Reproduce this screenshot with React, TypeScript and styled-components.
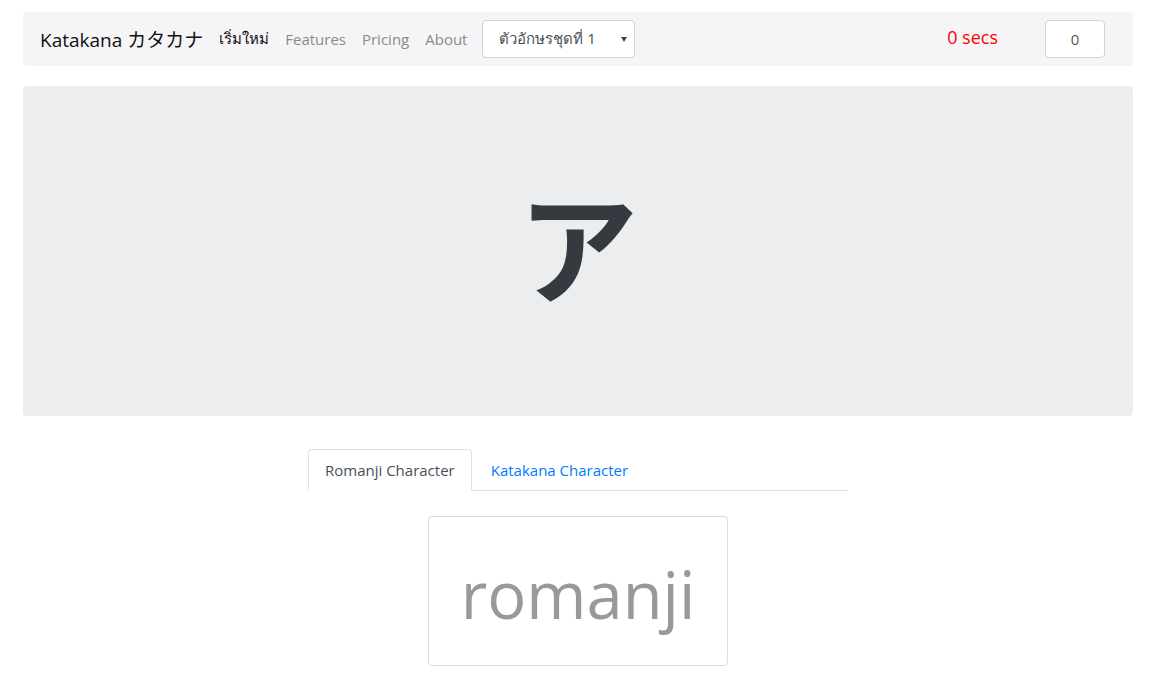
import React, {useState} from 'react';
import styled, {createGlobalStyle} from 'styled-components';

const GlobalStyle = createGlobalStyle`
  html, body {
    margin: 0;
    padding: 0;
    background: #fff;
    font-family: "Segoe UI", "Open Sans", "Noto Sans", "Noto Sans CJK JP", sans-serif;
    color: #212529;
  }
`;

const Page = styled.div`
  padding: 12px 22px 0 23px;
`;

const NavBar = styled.nav`
  display: flex;
  align-items: center;
  height: 54px;
  padding: 0 28px 0 17px;
  background: #f5f5f7;
  border-radius: 4px;
`;

const Brand = styled.a`
  font-size: 19px;
  color: #111;
  margin-right: 8px;
  white-space: nowrap;
  font-family: "Open Sans", "Noto Sans CJK JP", sans-serif;
`;

const NavLink = styled.a<{$active?: boolean}>`
  font-size: 15px;
  color: ${p => (p.$active ? '#111' : '#8a8a8a')};
  padding: 0 8px;
  white-space: nowrap;
`;

const SetSelect = styled.div`
  position: relative;
  display: flex;
  align-items: center;
  margin-left: 7px;
  width: 153px;
  height: 38px;
  box-sizing: border-box;
  padding-left: 16px;
  border: 1px solid #ced4da;
  border-radius: 4px;
  background: #fff;
  font-size: 15px;
  color: #495057;

  &::after {
    content: '';
    position: absolute;
    right: 7px;
    top: 16px;
    border-left: 3px solid transparent;
    border-right: 3px solid transparent;
    border-top: 5px solid #444;
  }
`;

const Spacer = styled.div`
  flex: 1;
`;

const Timer = styled.span`
  color: #f00;
  font-size: 18px;
  margin-right: 47px;
  margin-top: -4px;
`;

const ScoreBox = styled.div`
  width: 60px;
  height: 38px;
  box-sizing: border-box;
  border: 1px solid #ced4da;
  border-radius: 4px;
  background: #fff;
  display: flex;
  align-items: center;
  justify-content: center;
  font-size: 15px;
  color: #555;
`;

const Jumbotron = styled.div`
  margin-top: 20px;
  height: 330px;
  background: #ecedef;
  border-radius: 4px;
  display: flex;
  align-items: center;
  justify-content: center;
`;

const BigKana = styled.span`
  font-family: "Noto Sans CJK JP", sans-serif;
  font-weight: 700;
  font-size: 120px;
  line-height: 1;
  color: #343a40;
  margin-top: -16px;
`;

const TabArea = styled.div`
  width: 540px;
  margin: 33px auto 0;
`;

const TabList = styled.div`
  display: flex;
  border-bottom: 1px solid #dee2e6;
`;

const Tab = styled.button<{$active?: boolean}>`
  height: 42px;
  padding: 0 16px;
  margin-bottom: -1px;
  margin-right: 2px;
  font-family: inherit;
  font-size: 15px;
  background: ${p => (p.$active ? '#fff' : 'transparent')};
  cursor: pointer;
  border: 1px solid ${p => (p.$active ? '#dee2e6' : 'transparent')};
  border-bottom-color: ${p => (p.$active ? '#fff' : 'transparent')};
  border-radius: 4px 4px 0 0;
  color: ${p => (p.$active ? '#495057' : '#007bff')};
`;

const AnswerCard = styled.div`
  width: 300px;
  height: 150px;
  box-sizing: border-box;
  margin: 25px auto 0;
  border: 1px solid #dcdcdc;
  border-radius: 4px;
  display: flex;
  align-items: center;
  justify-content: center;
  font-size: 65px;
  color: #999;
  padding-top: 6px;
`;

export default function App() {
    const [tab, setTab] = useState<'romanji' | 'katakana'>('romanji');

    return (
        <Page>
            <GlobalStyle/>
            <NavBar>
                <Brand>Katakana カタカナ</Brand>
                <NavLink $active>เริ่มใหม่</NavLink>
                <NavLink>Features</NavLink>
                <NavLink>Pricing</NavLink>
                <NavLink>About</NavLink>
                <SetSelect>ตัวอักษรชุดที่ 1</SetSelect>
                <Spacer/>
                <Timer>0 secs</Timer>
                <ScoreBox>0</ScoreBox>
            </NavBar>

            <Jumbotron>
                <BigKana>ア</BigKana>
            </Jumbotron>

            <TabArea>
                <TabList>
                    <Tab $active={tab === 'romanji'} onClick={() => setTab('romanji')}>Romanji Character</Tab>
                    <Tab $active={tab === 'katakana'} onClick={() => setTab('katakana')}>Katakana Character</Tab>
                </TabList>
            </TabArea>

            <AnswerCard>{tab === 'romanji' ? 'romanji' : 'katakana'}</AnswerCard>
        </Page>
    );
}
